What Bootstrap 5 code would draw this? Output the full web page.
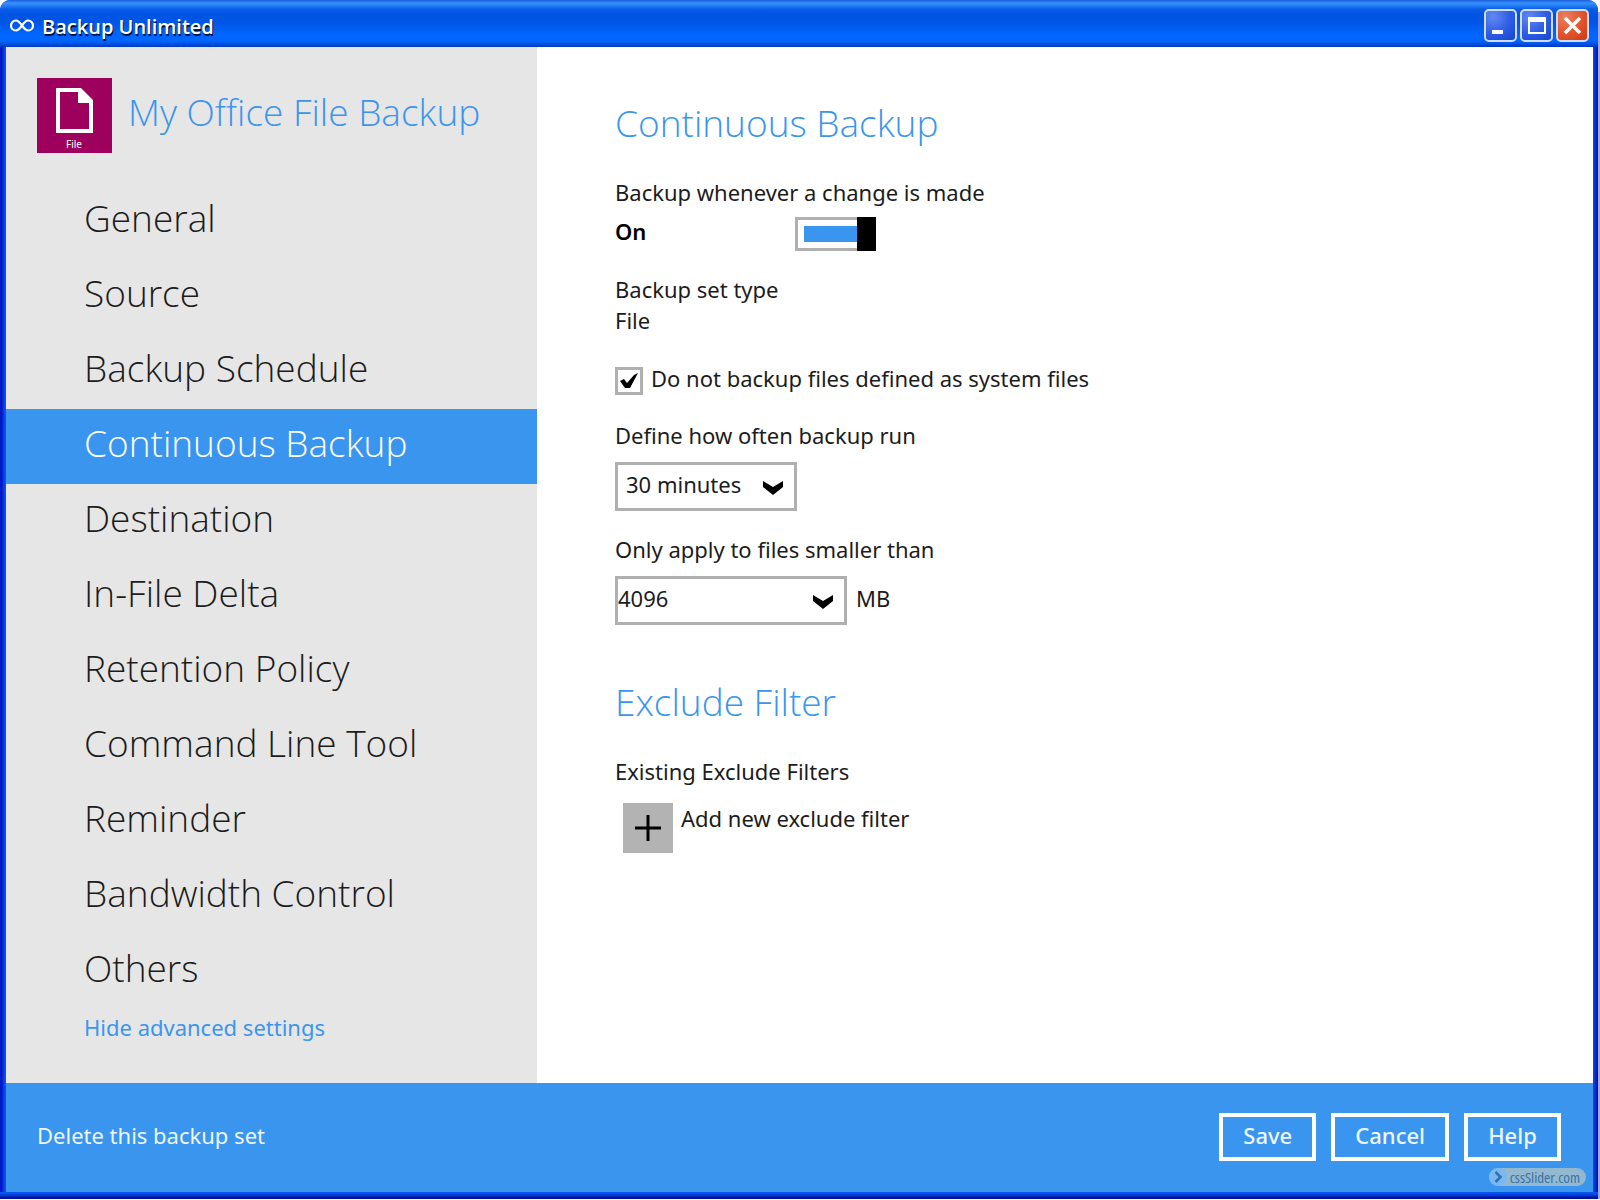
<!DOCTYPE html>
<html lang="en">
<head>
<meta charset="utf-8">
<meta name="viewport" content="width=device-width, initial-scale=1">
<title>Backup Unlimited</title>
<link rel="stylesheet" href="https://cdn.jsdelivr.net/npm/bootstrap@5.3.0/dist/css/bootstrap.min.css">
<style>
  :root { --accent: #3a95ee; --edge: #b0b0b0; }
  body { font-family: "Noto Sans", "Open Sans", sans-serif; font-size: 22px; line-height: 31px; color: #1c1c1c; background: linear-gradient(#fff 12px, #a3a6ec 12px); }
  .app-window { background: linear-gradient(90deg, #0019c8 0, #0019c8 2px, #0831d9 3px, #0a5bf0 6px, #0a5bf0 calc(100% - 6px), #0831d9 calc(100% - 3px), #00138c 100%); border-radius: 10px 10px 0 0; overflow: hidden; margin-right: 2px; padding: 0 5px 0 6px; min-height: calc(100vh - 1px); }
  .title-bar { height: 47px; margin: 0 -5px 0 -6px; padding: 4px 9px 0 10px;
    background: linear-gradient(180deg, #1c5cd8 0, #3593ff 3px, #2a84f6 5px, #0a5fe8 9px, #0054e3 14px, #0055e5 22px, #0066ff 34px, #0066ff 41px, #0050e0 44px, #0037c0 47px); }
  .title-text { font-family: "Open Sans", sans-serif; font-size: 20px; line-height: 28px; font-weight: 600; color: #fff; text-shadow: 1px 2px 0 #001340; padding-top: 2px; }
  .win-set { gap: 3px; }
  .win-btn { width: 33px; height: 33px; border: 2px solid #cfdcfb; border-radius: 5px; background: radial-gradient(circle at 25% 20%, #6288ee, #2c5ce6 55%, #1746c8); }
  .win-close { background: radial-gradient(circle at 25% 20%, #ea7f5e, #e2532b 55%, #c83c12); }
  .side-panel { flex: 0 0 531px; background: #e6e6e6; padding-top: 31px; }
  .set-head { padding-left: 31px; margin-bottom: 31px; gap: 16px; }
  .set-tile { width: 75px; height: 75px; background: #9e005d; }
  .thin-title { font-family: "Open Sans", sans-serif; font-size: 37px; line-height: 51px; font-weight: 300; color: var(--accent); margin: 0; }
  .set-head .thin-title { padding-top: 8px; }
  .side-nav .nav-link { font-family: "Open Sans", sans-serif; font-size: 37px; height: 75px; font-weight: 300; color: #1c1c1c; padding: 0 0 0 78px; }
  .side-nav .nav-link span { display: block; line-height: 68px; }
  .side-nav .nav-link.active { background: var(--accent); color: #fff; }
  .adv-link { color: var(--accent); text-decoration: none; margin: 3px 0 39px 78px; }
  .main-pane { padding: 50px 24px 24px 78px; }
  .thin-title + .field-label { margin-top: 29px; }
  .switch-row { height: 34px; margin: 9px 0 23px; width: 261px; }
  .switch-row label { font-weight: 600; color: #000; line-height: 28px; }
  .flat-switch { appearance: none; margin: 0; width: 81px; height: 34px;
    background:
      linear-gradient(#000, #000) right / 19px 100% no-repeat,
      linear-gradient(var(--accent), var(--accent)) 9px 50% / 60px 16px no-repeat,
      linear-gradient(#fff, #fff) 3px 50% / 60px 28px no-repeat,
      var(--edge); }
  .check-row { margin: 31px 0 25px; gap: 8px; }
  .check-row label { line-height: 23px; }
  .check-box { position: relative; width: 28px; height: 28px; }
  .check-box input { appearance: none; display: block; margin: 0; width: 28px; height: 28px; border: 3px solid var(--edge); background: #fff; }
  .check-box svg, .drop-box svg { position: absolute; pointer-events: none; }
  .check-box svg { left: 4px; top: 5px; display: none; }
  .check-box input:checked + svg { display: block; }
  .drop-box { position: relative; }
  .drop-box select { appearance: none; display: block; width: 100%; height: 49px; border: 3px solid var(--edge); border-radius: 0; background: #fff; color: inherit; padding: 0 40px 5px 8px; }
  .drop-box svg { right: 14px; top: 19px; }
  .drop-time { width: 182px; }
  .drop-size { width: 232px; }
  .drop-size select { padding-left: 0; }
  .drop-field { margin: 11px 0 23px; }
  .size-row { margin: 11px 0 51px; gap: 9px; }
  .size-row span { line-height: 45px; }
  .add-row { margin: 16px 0 0 8px; gap: 8px; }
  .add-btn { width: 50px; height: 50px; border: 0; padding: 0; background: #b3b3b3; }
  .foot-bar { position: relative; height: 109px; background: var(--accent); padding: 0 32px 2px 31px; }
  .foot-bar a { color: #eef6ff; text-decoration: none; margin-bottom: 3px; }
  .foot-set { gap: 15px; }
  .foot-btn { height: 48px; min-width: 97px; border: 4px solid #fff; border-radius: 0; background: transparent; color: #eef6ff; font-weight: 500; padding: 0 20px 3px; line-height: 31px; }
  .foot-bar .site-tag { position: absolute; right: 7px; bottom: 6px; margin: 0; height: 18px; border-radius: 9px; background: #93b9d0; color: #3a70a6; font: 15px/18px "Open Sans", sans-serif; font-stretch: 75%; padding-right: 6px; gap: 3px; }
  .site-tag svg { display: block; }
  .frame-bottom { height: 7px; margin: 0 -5px 0 -6px; background: linear-gradient(180deg, #0a5bf0 0, #0540e0 3px, #0019a8 5px, #00138c 7px); }
</style>
</head>
<body>
<div class="app-window d-flex flex-column">
  <header class="title-bar d-flex align-items-center">
    <svg width="24" height="14" viewBox="0 0 24 14" fill="none" stroke="#fff" stroke-width="2.2" aria-hidden="true"><path d="M12 6.500C9.500 3 8 1.500 6 1.500a5 5 0 0 0 0 10c2 0 3.500-1.500 6-5s4-5 6-5a5 5 0 0 1 0 10c-2 0-3.500-1.500-6-5Z"/></svg>
    <div class="title-text ms-2 me-auto">Backup Unlimited</div>
    <div class="win-set d-flex">
      <button class="win-btn p-0" type="button" aria-label="Minimize"><svg class="d-block" width="29" height="29" viewBox="0 0 29 29"><path d="M6 19h11v4H6z" fill="#fff"/></svg></button>
      <button class="win-btn p-0" type="button" aria-label="Maximize"><svg class="d-block" width="29" height="29" viewBox="0 0 29 29"><path d="M6 6h18v17H6zM8 11v10h14V11z" fill="#fff" fill-rule="evenodd"/></svg></button>
      <button class="win-btn win-close p-0" type="button" aria-label="Close"><svg class="d-block" width="29" height="29" viewBox="0 0 29 29"><path d="M7 7l15 15M22 7L7 22" stroke="#fff" stroke-width="3.500"/></svg></button>
    </div>
  </header>

  <div class="d-flex flex-grow-1">
    <aside class="side-panel d-flex flex-column">
      <div class="set-head d-flex">
        <svg class="set-tile" viewBox="0 0 75 75" role="img" aria-label="File backup set">
          <path d="M19 10h25l12 12v33H19zM23 14v37h29V25H41V14z" fill="#fff" fill-rule="evenodd"/>
          <text x="37" y="70" text-anchor="middle" font-size="10" fill="#fff">File</text>
        </svg>
        <h1 class="thin-title">My Office File Backup</h1>
      </div>
      <nav class="side-nav nav flex-column" aria-label="Backup set settings">
        <a class="nav-link" href="#"><span>General</span></a>
        <a class="nav-link" href="#"><span>Source</span></a>
        <a class="nav-link" href="#"><span>Backup Schedule</span></a>
        <a class="nav-link active" aria-current="page" href="#"><span>Continuous Backup</span></a>
        <a class="nav-link" href="#"><span>Destination</span></a>
        <a class="nav-link" href="#"><span>In-File Delta</span></a>
        <a class="nav-link" href="#"><span>Retention Policy</span></a>
        <a class="nav-link" href="#"><span>Command Line Tool</span></a>
        <a class="nav-link" href="#"><span>Reminder</span></a>
        <a class="nav-link" href="#"><span>Bandwidth Control</span></a>
        <a class="nav-link" href="#"><span>Others</span></a>
      </nav>
      <a class="adv-link" href="#">Hide advanced settings</a>
    </aside>

    <main class="main-pane flex-grow-1 bg-white">
      <h2 class="thin-title">Continuous Backup</h2>
      <div class="field-label">Backup whenever a change is made</div>
      <div class="switch-row d-flex justify-content-between">
        <label for="continuous">On</label>
        <input class="flat-switch" type="checkbox" role="switch" id="continuous" checked>
      </div>
      <div>Backup set type</div>
      <div>File</div>
      <div class="check-row d-flex">
        <div class="check-box">
          <input type="checkbox" id="skip-system" checked>
          <svg width="20" height="18" viewBox="0 0 20 18"><path d="M1 9l4-2 3 4 7-8 4-2-8 15H6z" fill="#000"/></svg>
        </div>
        <label for="skip-system">Do not backup files defined as system files</label>
      </div>
      <label class="d-block" for="interval">Define how often backup run</label>
      <div class="drop-field drop-box drop-time">
        <select id="interval"><option>30 minutes</option></select>
        <svg width="20" height="14" viewBox="0 0 20 14"><path d="M0 0l10 6 10-6v6l-10 8L0 6z" fill="#000"/></svg>
      </div>
      <label class="d-block" for="max-size">Only apply to files smaller than</label>
      <div class="size-row d-flex">
        <div class="drop-box drop-size">
          <select id="max-size"><option>4096</option></select>
          <svg width="20" height="14" viewBox="0 0 20 14"><path d="M0 0l10 6 10-6v6l-10 8L0 6z" fill="#000"/></svg>
        </div>
        <span>MB</span>
      </div>
      <h2 class="thin-title">Exclude Filter</h2>
      <div class="field-label">Existing Exclude Filters</div>
      <div class="add-row d-flex">
        <button class="add-btn" type="button" id="add-filter"><svg class="d-block" width="50" height="50" viewBox="0 0 50 50"><path d="M12 25h26M25 12v26" stroke="#000" stroke-width="3"/></svg></button>
        <label for="add-filter">Add new exclude filter</label>
      </div>
    </main>
  </div>

  <footer class="foot-bar d-flex align-items-center justify-content-between">
    <a href="#">Delete this backup set</a>
    <div class="foot-set d-flex">
      <button class="foot-btn" type="button">Save</button>
      <button class="foot-btn" type="button">Cancel</button>
      <button class="foot-btn" type="button">Help</button>
    </div>
    <a class="site-tag d-flex" href="#"><svg width="18" height="18" viewBox="0 0 18 18"><circle cx="9" cy="9" r="9" fill="#79b8f2"/><path d="M6.500 4l5 5-5 5" fill="none" stroke="#3470ad" stroke-width="2.500"/></svg>cssSlider.com</a>
  </footer>
  <div class="frame-bottom"></div>
</div>
<script src="https://cdn.jsdelivr.net/npm/bootstrap@5.3.0/dist/js/bootstrap.bundle.min.js"></script>
</body>
</html>
